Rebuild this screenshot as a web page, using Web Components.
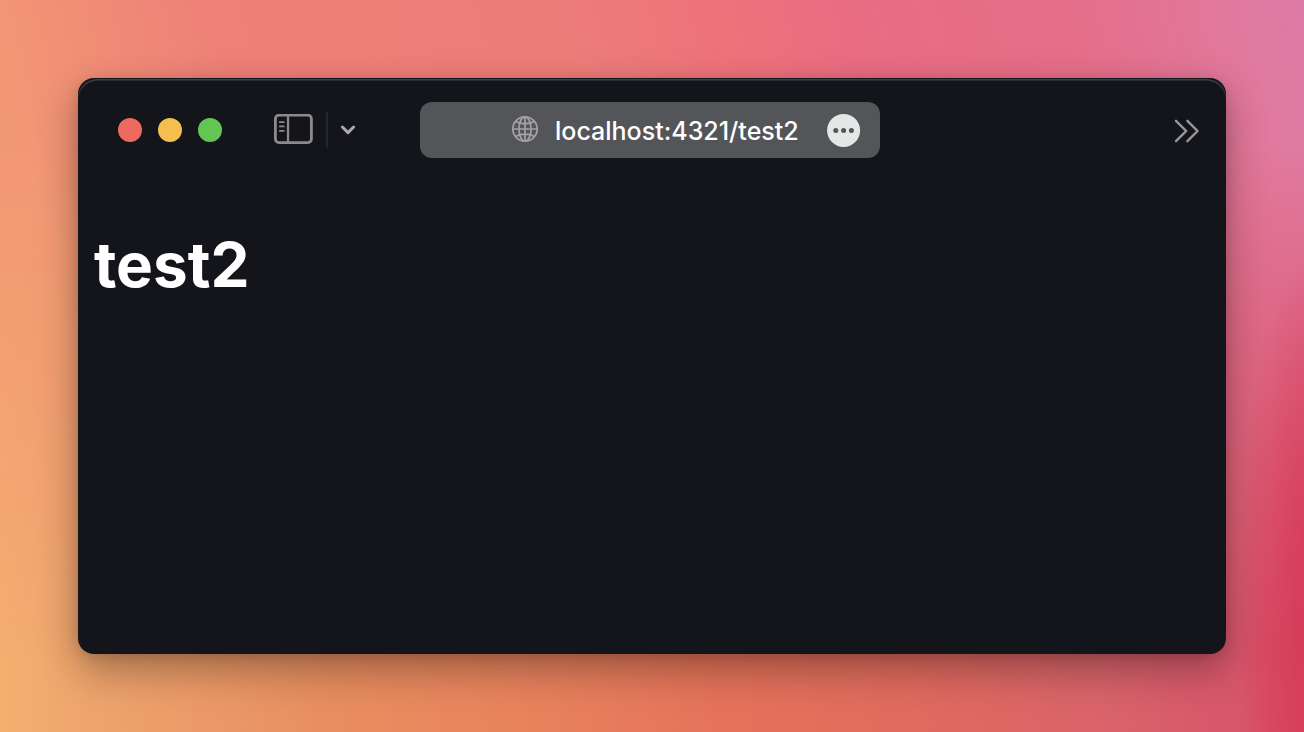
<!DOCTYPE html>
<html lang="en">
<head>
<meta charset="utf-8">
<meta name="viewport" content="width=device-width, initial-scale=1">
<title>test2</title>
<style>
  body {
    margin: 0;
    font-family: Inter, "Liberation Sans", sans-serif;
  }
</style>
</head>
<body>
<desktop-backdrop>
  <browser-window>
    <browser-toolbar slot="toolbar">
      <window-controls slot="start"></window-controls>
      <sidebar-toggle slot="start"></sidebar-toggle>
      <address-bar url="localhost:4321/test2"></address-bar>
      <overflow-button slot="end"></overflow-button>
    </browser-toolbar>
    <page-title>test2</page-title>
  </browser-window>
</desktop-backdrop>

<script>
class BaseElement extends HTMLElement {
  constructor() {
    super();

    const template = document.createElement('template');
    template.innerHTML = this.constructor.markup;
    this._shadowRoot = this.attachShadow({ mode: 'open' });
    this._shadowRoot.appendChild(template.content.cloneNode(true));
  }
}

class DesktopBackdrop extends BaseElement {
  static markup = `
    <style>
      :host {
        display: flex;
        position: relative;
        isolation: isolate;
        box-sizing: border-box;
        min-height: 100vh;
        padding: 78px;
        background: linear-gradient(90deg, #f5ae70 0%, #eda36c 8%, #e88e60 25%, #e8835d 40%, #e5735a 55%, #e06b5e 70%, #d9636a 85%, #d8566a 95%, #d7485f 100%);
      }
      /* upper colours, faded out towards the bottom */
      :host::before,
      :host::after {
        content: '';
        position: absolute;
        inset: 0;
        z-index: -1;
      }
      :host::before {
        background: linear-gradient(75deg, #f29774 0%, #f29774 12%, #ee8078 27%, #ec7c79 51%, #ee7379 60%, #e96c82 69%, #e56e89 84%, #e07a9f 96%, #dd7aa5 100%);
        -webkit-mask-image: linear-gradient(#000 20%, transparent 90%);
        mask-image: linear-gradient(#000 20%, transparent 90%);
      }
      :host::after {
        background: radial-gradient(ellipse 6% 48% at 101% 82%, #d63a58 0%, #d63a5800 100%);
      }
      ::slotted(*) {
        flex: 1;
      }
    </style>
    <slot></slot>
  `;
}

class BrowserWindow extends BaseElement {
  static markup = `
    <style>
      :host {
        display: flex;
        flex-direction: column;
        box-sizing: border-box;
        min-width: 0;
        padding-top: 1px;
        border-radius: 16px;
        color: #fff;
        background: #14151a;
        box-shadow: 0 16px 40px rgba(0, 0, 0, 0.32), 0 2px 12px rgba(0, 0, 0, 0.12);
      }
      .frame {
        flex: 1;
        border-radius: 20px 20px 16px 16px;
        box-shadow: inset 0 1px 0 #3d3f43, inset 0 2px 0 #292b2f;
      }
    </style>
    <div class="frame">
      <slot name="toolbar"></slot>
      <main><slot></slot></main>
    </div>
  `;
}

class BrowserToolbar extends BaseElement {
  static markup = `
    <style>
      :host {
        display: grid;
        grid-template-columns: 1fr minmax(0, 460px) 1fr;
        align-items: center;
        padding: 23px 26px 24px 22px;
      }
      .start,
      .end {
        display: flex;
        align-items: center;
      }
      .start {
        gap: 52px;
        padding-left: 18px;
      }
      .end {
        justify-content: flex-end;
      }
    </style>
    <div class="start"><slot name="start"></slot></div>
    <slot></slot>
    <div class="end"><slot name="end"></slot></div>
  `;
}

class WindowControls extends BaseElement {
  static markup = `
    <style>
      :host {
        display: flex;
        gap: 16px;
      }
      button {
        width: 24px;
        height: 24px;
        padding: 0;
        border: 0;
        border-radius: 50%;
      }
      .close { background: #ed6a5f; }
      .minimize { background: #f5bf4f; }
      .zoom { background: #62c655; }
    </style>
    <button class="close" aria-label="Close"></button>
    <button class="minimize" aria-label="Minimize"></button>
    <button class="zoom" aria-label="Zoom"></button>
  `;
}

class SidebarToggle extends BaseElement {
  static markup = `
    <style>
      :host {
        display: flex;
        align-items: center;
      }
      button {
        display: flex;
        padding: 0;
        border: 0;
        background: none;
      }
      .divider {
        width: 2px;
        height: 36px;
        margin: 0 12px;
        background: #25262b;
      }
      svg {
        display: block;
        fill: none;
        stroke-linecap: round;
        stroke-linejoin: round;
      }
    </style>
    <button aria-label="Show sidebar">
      <svg width="40" height="32" viewBox="0 0 40 32" stroke="#8b8b8e">
        <rect x="1.4" y="1.2" width="36" height="27.4" rx="3.5" stroke-width="2.8"/>
        <path d="M14 2v26" stroke-width="2.3"/>
        <path d="M5.8 8.2h4M5.8 12.4h4M5.8 16.8h4" stroke-width="1.8"/>
      </svg>
    </button>
    <span class="divider"></span>
    <button aria-label="Tab groups">
      <svg width="16" height="12" viewBox="0 0 16 12" stroke="#aaaaac">
        <path d="M2.4 3l5.6 5.6 5.6-5.6" stroke-width="3"/>
      </svg>
    </button>
  `;
}

class AddressBar extends BaseElement {
  static markup = `
    <style>
      :host {
        display: flex;
        align-items: center;
        justify-content: flex-end;
        box-sizing: border-box;
        height: 56px;
        padding: 0 19px;
        border-radius: 12px;
        background: #545559;
      }
      label {
        display: flex;
        margin-right: 16px;
      }
      input {
        width: 248px;
        min-width: 0;
        height: 40px;
        margin-right: 24px;
        padding: 2px 0 0;
        box-sizing: border-box;
        border: 0;
        outline: none;
        color: #fff;
        font: 500 25px Inter, "Liberation Sans", sans-serif;
        background: none;
      }
      button {
        display: flex;
        padding: 0;
        border: 0;
        background: none;
      }
    </style>
    <label for="url" aria-label="Address">
      <svg width="28" height="30" viewBox="0 0 28 30" fill="none" stroke="#a3a3a6" stroke-width="1.7">
        <circle cx="14" cy="14" r="12.2"/>
        <ellipse cx="14" cy="14" rx="6" ry="12.2"/>
        <path d="M14 1.8v24.4M1.8 14h24.4M4.6 6.6c5.2 3 13.6 3 18.8 0M4.6 21.4c5.2-3 13.6-3 18.8 0"/>
      </svg>
    </label>
    <input id="url" type="text" spellcheck="false">
    <button aria-label="Page menu">
      <svg width="34" height="34" viewBox="0 0 34 34">
        <circle cx="16.6" cy="17.4" r="16.5" fill="#e5e7e7"/>
        <g fill="#545559">
          <circle cx="8.8" cy="17.4" r="2.5"/>
          <circle cx="16.6" cy="17.4" r="2.5"/>
          <circle cx="24.4" cy="17.4" r="2.5"/>
        </g>
      </svg>
    </button>
  `;

  connectedCallback() {
    this._shadowRoot.querySelector('input').value = this.getAttribute('url');
  }
}

class OverflowButton extends BaseElement {
  static markup = `
    <style>
      :host {
        display: flex;
      }
      button {
        display: flex;
        padding: 2px 0 0;
        border: 0;
        background: none;
      }
    </style>
    <button aria-label="More toolbar items">
      <svg width="26" height="24" viewBox="0 0 26 24" fill="none" stroke="#98989b" stroke-width="2.4" stroke-linecap="round" stroke-linejoin="round">
        <path d="M2 1.8L12.2 12 2 22.2M13.4 1.8L23.6 12 13.4 22.2"/>
      </svg>
    </button>
  `;
}

class PageTitle extends BaseElement {
  static markup = `
    <style>
      :host {
        display: block;
        padding: 0 16px;
      }
      h1 {
        margin: 43px 0;
        font-size: 62px;
        line-height: 80px;
        font-weight: 700;
      }
    </style>
    <h1><slot></slot></h1>
  `;
}

customElements.define('desktop-backdrop', DesktopBackdrop);
customElements.define('browser-window', BrowserWindow);
customElements.define('browser-toolbar', BrowserToolbar);
customElements.define('window-controls', WindowControls);
customElements.define('sidebar-toggle', SidebarToggle);
customElements.define('address-bar', AddressBar);
customElements.define('overflow-button', OverflowButton);
customElements.define('page-title', PageTitle);
</script>
</body>
</html>
